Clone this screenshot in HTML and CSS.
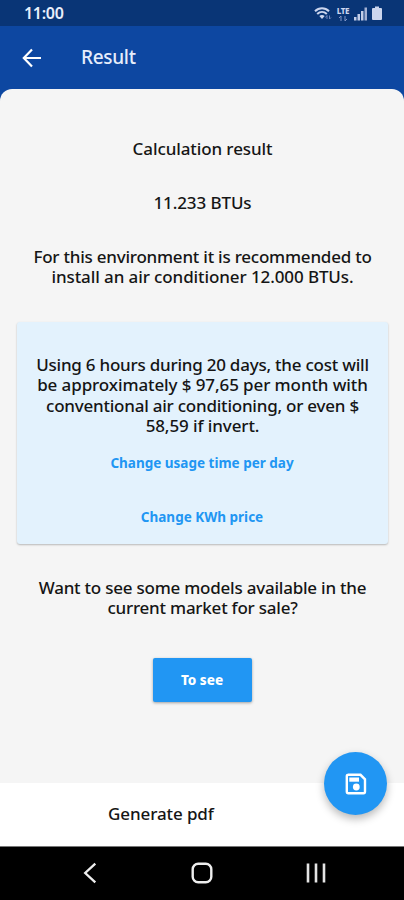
FILE: index.html
```html
<!DOCTYPE html>
<html lang="en">
<head>
  <meta charset="UTF-8">
  <meta name="viewport" content="width=device-width, initial-scale=1.0">
  <title>Result</title>
  <link rel="stylesheet" href="styles.css">
</head>
<body>
  <div class="status-bar">
    <span class="clock">11:00</span>
    <div class="status-icons">
      <svg width="18" height="16" viewBox="0 0 18 16">
        <g fill="none" stroke="#ccd6ee" stroke-width="2">
          <path d="M1 5.200C5 1.300 11 1.300 15 5.200"/>
          <path d="M3.200 8C6 5.300 10 5.300 12.800 8"/>
        </g>
        <path d="M5.300 10C7 8.500 9 8.500 10.700 10L8 13Z" fill="#ccd6ee"/>
        <path d="M11.500 11.500L13 9.500V13M15.500 9.500V13L17 11.500" fill="none" stroke="#7187bd"/>
      </svg>
      <div class="lte">
        <span>LTE</span>
        <svg width="10" height="5" viewBox="0 0 10 5">
          <path d="M1 2L3 0V5M7 0V5L9 3" fill="none" stroke="#8396c6"/>
        </svg>
      </div>
      <svg width="14" height="14" viewBox="0 0 14 14" fill="#c3cee8">
        <rect x="0" y="10" width="2.500" height="3.500"/>
        <rect x="3.500" y="7" width="2.500" height="6.500"/>
        <rect x="7" y="4" width="2.500" height="9.500"/>
        <rect x="10.500" y="0.500" width="2.500" height="13" fill="#a3b1d4"/>
      </svg>
      <svg width="10" height="15" viewBox="0 0 10 15">
        <path d="M3 0.500H7V2H9Q10 2 10 3V13Q10 14 9 14H1Q0 14 0 13V3Q0 2 1 2H3Z" fill="#ccd6ee"/>
      </svg>
    </div>
  </div>

  <header class="app-bar">
    <svg class="back" width="20" height="20" viewBox="0 0 20 20">
      <path d="M10 1.500L1.800 10L10 18.500M2 10H19" fill="none" stroke="#fff" stroke-width="2.200"/>
    </svg>
    <h1>Result</h1>
  </header>

  <main class="panel">
    <p class="heading">Calculation result</p>
    <p class="btus">11.233 BTUs</p>
    <p class="advice">
      <span class="line snug">For this environment it is recommended to</span>
      <span class="line">install an air conditioner 12.000 BTUs.</span>
    </p>

    <section class="card">
      <p class="cost">
        <span class="line snug">Using 6 hours during 20 days, the cost will</span>
        <span class="line">be approximately $ 97,65 per month with</span>
        <span class="line snug">conventional air conditioning, or even $</span>
        <span class="line">58,59 if invert.</span>
      </p>
      <a class="link usage">Change usage time per day</a>
      <a class="link price">Change KWh price</a>
    </section>

    <p class="models">
      <span class="line snug">Want to see some models available in the</span>
      <span class="line snug">current market for sale?</span>
    </p>
    <button class="see" type="button">To see</button>
  </main>

  <footer class="bottom-bar">
    <span class="generate">Generate pdf</span>
    <button class="fab" type="button" aria-label="Save">
      <svg width="22" height="22" viewBox="0 0 22 22">
        <path d="M3 1.800H15.500L20 6.300V18.500Q20 20.200 18.500 20.200H3.300Q1.800 20.200 1.800 18.500V3.300Q1.800 1.800 3.300 1.800Z" fill="none" stroke="#fff" stroke-width="2.400"/>
        <path d="M4.300 4.500H14V8.700H4.300Z" fill="#fff"/>
        <circle cx="11.300" cy="14" r="3.400" fill="#fff"/>
      </svg>
    </button>
  </footer>

  <nav class="nav-bar">
    <svg width="14" height="22" viewBox="0 0 14 22">
      <path d="M12.300 1.700L2.200 11L12.300 20.300" fill="none" stroke="#eee" stroke-width="2.300"/>
    </svg>
    <svg width="22" height="22" viewBox="0 0 22 22">
      <rect x="1.700" y="1.700" width="18.600" height="18.600" rx="5.500" fill="none" stroke="#eee" stroke-width="2.400"/>
    </svg>
    <svg width="20" height="22" viewBox="0 0 20 22">
      <path d="M2 1.500V20.500M10 1.500V20.500M18 1.500V20.500" stroke="#e4e4e4" stroke-width="2.600"/>
    </svg>
  </nav>
</body>
</html>
```

FILE: styles.css
```css
* {
  box-sizing: border-box;
}
body {
  margin: 0;
  width: 404px;
  height: 900px;
  overflow: hidden;
  display: flex;
  flex-direction: column;
  background-color: #0d47a1;
  color: #151515;
  font-family: "Noto Sans", "Open Sans", sans-serif;
  font-size: 17px;
  font-weight: 500;
  line-height: 20.3px;
  letter-spacing: -0.1px;
}
p, h1 {
  margin: 0;
  white-space: nowrap;
}
p {
  padding-left: 1px;
}
svg {
  display: block;
}
button {
  border: none;
  padding: 0;
  font-family: inherit;
  color: #fff;
  background-color: #2196f3;
}
.line {
  display: block;
}
.snug {
  letter-spacing: -0.23px;
}
.status-bar {
  height: 26px;
  flex: none;
  display: flex;
  justify-content: space-between;
  align-items: center;
  padding: 1px 22px 0 24px;
  background-color: #093576;
}
.clock {
  color: #e8eefa;
  font-size: 16px;
  font-weight: 600;
  letter-spacing: -0.3px;
}
.status-icons {
  display: flex;
  align-items: center;
  gap: 4px;
}
.lte {
  width: 14px;
  display: flex;
  flex-direction: column;
  align-items: center;
  gap: 1px;
  color: #ccd6ee;
  font-size: 8px;
  font-weight: 800;
  line-height: 8px;
  letter-spacing: -0.4px;
}
.app-bar {
  height: 63px;
  flex: none;
  display: flex;
  align-items: center;
  padding-left: 22px;
  gap: 39px;
}
.app-bar h1 {
  color: #e6edfb;
  font-size: 19px;
  font-weight: 500;
  letter-spacing: -0.3px;
}
.panel {
  flex: 1;
  display: flex;
  flex-direction: column;
  align-items: center;
  padding: 50px 17px 0;
  border-radius: 12px 12px 0 0;
  background-color: #f5f5f5;
  text-align: center;
}
.btus {
  margin-top: 34px;
}
.advice {
  margin-top: 33px;
}
.card {
  width: 371px;
  height: 222px;
  margin-top: 35px;
  padding-top: 33px;
  display: flex;
  flex-direction: column;
  align-items: center;
  border-radius: 3px;
  background-color: #e3f2fd;
  box-shadow: 0 1px 2px rgba(0, 0, 0, 0.25);
}
.link {
  color: #2196f3;
  font-size: 13.5px;
  font-weight: 700;
  letter-spacing: 0;
}
.usage {
  margin-top: 17px;
}
.price {
  margin-top: 33px;
}
.models {
  margin-top: 34px;
}
.see {
  width: 99px;
  height: 44px;
  margin-top: 39px;
  border-radius: 2px;
  font-size: 13.5px;
  font-weight: 800;
  box-shadow: 0 1px 3px rgba(0, 0, 0, 0.35);
}
.bottom-bar {
  position: relative;
  height: 64px;
  flex: none;
  padding: 21px 0 0 108px;
  background-color: #fff;
  border-bottom: 1px solid #777;
}
.fab {
  position: absolute;
  top: -31px;
  right: 17px;
  width: 63px;
  height: 63px;
  display: flex;
  align-items: center;
  justify-content: center;
  border-radius: 50%;
  box-shadow: 0 4px 8px rgba(0, 0, 0, 0.28);
}
.nav-bar {
  height: 53px;
  flex: none;
  display: flex;
  padding: 15px 78px 0 83px;
  justify-content: space-between;
  background-color: #000;
}
```
